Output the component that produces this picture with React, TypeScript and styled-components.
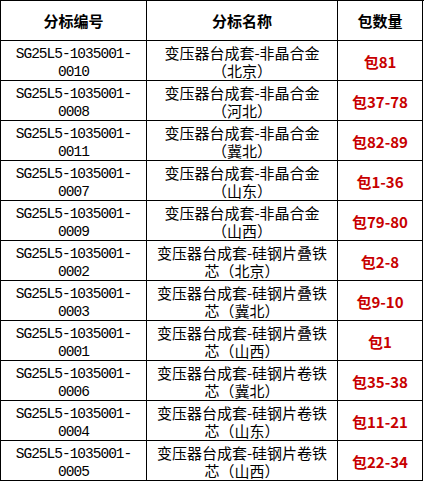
import React from "react";
import styled, { createGlobalStyle } from "styled-components";

const Global = createGlobalStyle`
  html, body { margin: 0; padding: 0; background: #fff; }
`;

const Grid = styled.div`
  display: grid;
  grid-template-columns: 146px 191px 85px;
  grid-auto-rows: 40px;
  width: 423px;
  border-left: 1px solid #000;
  border-top: 1px solid #000;
  background: #fff;
  font-family: "Noto Sans CJK SC", sans-serif;
`;

const Cell = styled.div<{ $kind?: "head" | "code" | "name" | "count" }>`
  border-right: 1px solid #000;
  border-bottom: 1px solid #000;
  display: flex;
  flex-direction: column;
  align-items: center;
  justify-content: center;
  text-align: center;
  color: ${(p) => (p.$kind === "count" ? "#c80000" : "#000")};
  font-weight: ${(p) => (p.$kind === "head" || p.$kind === "count" ? 700 : 400)};
  font-family: ${(p) =>
    p.$kind === "code"
      ? '"Liberation Mono", monospace'
      : '"Noto Sans CJK SC", sans-serif'};
  font-size: ${(p) => (p.$kind === "code" ? "14.5px" : "15px")};
  letter-spacing: ${(p) => (p.$kind === "code" ? "-1px" : "0")};
  line-height: 18px;
  padding-top: ${(p) =>
    p.$kind === "head" ? "1px" : p.$kind === "code" ? "4px" : "3px"};
  box-sizing: border-box;
  white-space: nowrap;
`;

const Line = styled.span`
  display: block;
  height: 18px;
`;

const Bracket = styled.span<{ $open?: boolean }>`
  display: inline-block;
  width: 15px;
  text-align: ${(p) => (p.$open ? "right" : "left")};
`;

const rows: [string, string, string, string, string][] = [
  ["0010", "变压器台成套-非晶合金", "", "北京", "包81"],
  ["0008", "变压器台成套-非晶合金", "", "河北", "包37-78"],
  ["0011", "变压器台成套-非晶合金", "", "冀北", "包82-89"],
  ["0007", "变压器台成套-非晶合金", "", "山东", "包1-36"],
  ["0009", "变压器台成套-非晶合金", "", "山西", "包79-80"],
  ["0002", "变压器台成套-硅钢片叠铁", "芯", "北京", "包2-8"],
  ["0003", "变压器台成套-硅钢片叠铁", "芯", "冀北", "包9-10"],
  ["0001", "变压器台成套-硅钢片叠铁", "芯", "山西", "包1"],
  ["0006", "变压器台成套-硅钢片卷铁", "芯", "冀北", "包35-38"],
  ["0004", "变压器台成套-硅钢片卷铁", "芯", "山东", "包11-21"],
  ["0005", "变压器台成套-硅钢片卷铁", "芯", "山西", "包22-34"],
];

export default function App() {
  return (
    <>
      <Global />
      <Grid>
        <Cell $kind="head">分标编号</Cell>
        <Cell $kind="head">分标名称</Cell>
        <Cell $kind="head">包数量</Cell>
        {rows.map(([code, n1, pre, region, count]) => (
          <React.Fragment key={code}>
            <Cell $kind="code">
              <Line>SG25L5-1035001-</Line>
              <Line>{code}</Line>
            </Cell>
            <Cell $kind="name">
              <Line>{n1}</Line>
              <Line>
                {pre}
                <Bracket $open>（</Bracket>
                {region}
                <Bracket>）</Bracket>
              </Line>
            </Cell>
            <Cell $kind="count">{count}</Cell>
          </React.Fragment>
        ))}
      </Grid>
    </>
  );
}
